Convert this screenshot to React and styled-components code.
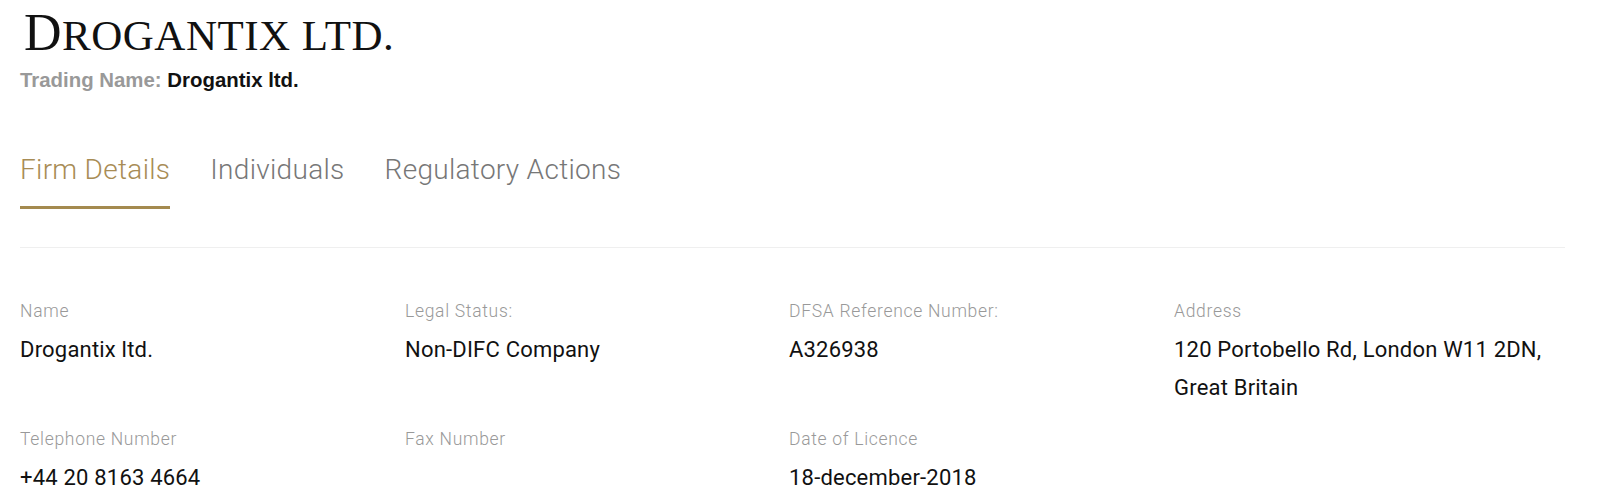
import React from "react";
import styled, { createGlobalStyle } from "styled-components";

const Global = createGlobalStyle`
  html, body { margin: 0; padding: 0; background: #fff; }
  body { font-family: Roboto, "Liberation Sans", sans-serif; }
`;

const Page = styled.div`
  padding: 3px 35px 0 20px;
`;

const Title = styled.h1`
  margin: 0;
  font-family: "Liberation Serif", serif;
  font-weight: 400;
  font-size: 43px;
  line-height: 60px;
  color: #111;
  text-transform: uppercase;
  letter-spacing: 0.5px;
  padding-left: 4px;
`;

const Initial = styled.span`
  font-size: 52px;
`;

const TradingName = styled.div`
  margin-top: 2px;
  font-family: "Liberation Sans", Arial, sans-serif;
  font-weight: 700;
  font-size: 20.4px;
  line-height: 24px;
  color: #111;
`;

const Muted = styled.span`
  color: #999;
`;

const TabList = styled.nav`
  margin-top: 60px;
  display: flex;
  gap: 40px;
`;

const Tab = styled.div`
  font-family: Roboto, sans-serif;
  font-weight: 300;
  font-size: 28px;
  line-height: 36px;
  letter-spacing: 0.3px;
  padding-bottom: 18px;
  color: ${(p) => (p.$active ? "#a88c55" : "#777")};
  border-bottom: 3px solid ${(p) => (p.$active ? "#a48a4f" : "transparent")};
`;

const Divider = styled.hr`
  margin: 38px 0 0;
  border: 0;
  border-top: 1px solid #efefef;
`;

const Grid = styled.div`
  padding-top: 51px;
  display: grid;
  grid-template-columns: 385px 384px 385px 1fr;
  row-gap: 20px;
`;

const Field = styled.div`
  display: flex;
  flex-direction: column;
  gap: 8px;
`;

const Label = styled.div`
  font-family: Roboto, sans-serif;
  font-weight: 300;
  font-size: 17.5px;
  line-height: 24px;
  letter-spacing: 0.7px;
  color: #999;
`;

const Value = styled.div`
  font-family: Roboto, sans-serif;
  font-weight: 400;
  font-size: 22px;
  line-height: 38px;
  letter-spacing: 0.2px;
  color: #111;
  min-height: 38px;
`;

const fields = [
  { label: "Name", value: "Drogantix ltd." },
  { label: "Legal Status:", value: "Non-DIFC Company" },
  { label: "DFSA Reference Number:", value: "A326938" },
  { label: "Address", value: ["120 Portobello Rd, London W11 2DN,", "Great Britain"] },
  { label: "Telephone Number", value: "+44 20 8163 4664" },
  { label: "Fax Number", value: "" },
  { label: "Date of Licence", value: "18-december-2018" },
];

export default function App() {
  return (
    <Page>
      <Global />
      <Title>
        <Initial>D</Initial>rogantix ltd.
      </Title>
      <TradingName>
        <Muted>Trading Name:</Muted> Drogantix ltd.
      </TradingName>
      <TabList>
        <Tab $active>Firm Details</Tab>
        <Tab>Individuals</Tab>
        <Tab>Regulatory Actions</Tab>
      </TabList>
      <Divider />
      <Grid>
        {fields.map((f) => (
          <Field key={f.label}>
            <Label>{f.label}</Label>
            <Value>
              {Array.isArray(f.value)
                ? f.value.map((l, i) => <div key={i}>{l}</div>)
                : f.value}
            </Value>
          </Field>
        ))}
      </Grid>
    </Page>
  );
}
